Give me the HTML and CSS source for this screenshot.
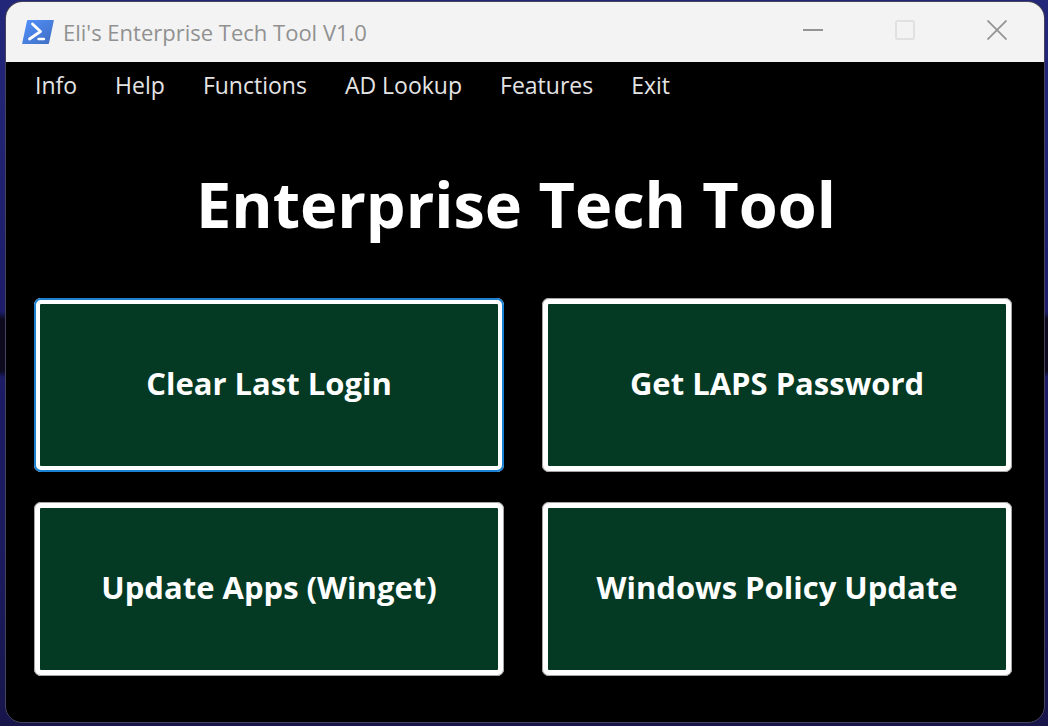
FILE: index.html
```html
<!DOCTYPE html>
<html lang="en">
<head>
<meta charset="utf-8">
<title>Eli's Enterprise Tech Tool V1.0</title>
<link rel="stylesheet" href="styles.css">
</head>
<body>
<div class="window">
  <header class="titlebar">
    <svg class="app-icon" viewBox="0 0 32 24" aria-hidden="true">
      <defs>
        <linearGradient id="ps" x1="0" y1="0" x2="1" y2="1">
          <stop offset="0" stop-color="#5391fe"/>
          <stop offset="1" stop-color="#3e6dbf"/>
        </linearGradient>
      </defs>
      <path d="M6 0H31.200Q32 0 31.800 .8L27 23.200Q26.800 24 26 24H.8Q0 24 .2 23.200L5 .8Q5.200 0 6 0Z" fill="url(#ps)"/>
      <path d="M10.500 4L18.500 11.500L7.500 19" fill="none" stroke="#fff" stroke-width="2.800" stroke-linecap="round" stroke-linejoin="round"/>
      <path d="M16.500 19H22" stroke="#fff" stroke-width="2.400" stroke-linecap="round"/>
    </svg>
    <span class="title">Eli's Enterprise Tech Tool V1.0</span>
    <div class="controls">
      <button class="control" type="button" aria-label="Minimize"><svg viewBox="0 0 20 20"><path d="M0 10H20" stroke="#939594" stroke-width="2"/></svg></button>
      <button class="control" type="button" aria-label="Maximize" disabled><svg viewBox="0 0 20 20"><rect x="1" y="1" width="18" height="18" rx="1.500" fill="none" stroke="#e1e1e1" stroke-width="2"/></svg></button>
      <button class="control" type="button" aria-label="Close"><svg viewBox="0 0 20 20"><path d="M.5 .5L19.500 19.500M19.500 .5L.5 19.500" stroke="#939594" stroke-width="1.800"/></svg></button>
    </div>
  </header>
  <nav class="menu">
    <button class="menu-item" type="button">Info</button>
    <button class="menu-item" type="button">Help</button>
    <button class="menu-item" type="button">Functions</button>
    <button class="menu-item" type="button">AD Lookup</button>
    <button class="menu-item" type="button">Features</button>
    <button class="menu-item" type="button">Exit</button>
  </nav>
  <main class="content">
    <h1 class="heading">Enterprise Tech Tool</h1>
    <div class="actions">
      <button class="action action-default" type="button">Clear Last Login</button>
      <button class="action" type="button">Get LAPS Password</button>
      <button class="action" type="button">Update Apps (Winget)</button>
      <button class="action" type="button">Windows Policy Update</button>
    </div>
  </main>
</div>
</body>
</html>
```
FILE: styles.css
```css
* {
  box-sizing: border-box;
}

body {
  margin: 0;
  min-height: 100vh;
  display: flex;
  padding: 1px 3px 3px 5px;
  font-family: "Open Sans", "Noto Sans", sans-serif;
  background: linear-gradient(#23277a 0, #1c1c68 43%, #0c0a1c 44%, #0c0a1c 51%, #1b1b66 52%, #1a1a5c 80%, #17154a 100%);
}

button {
  margin: 0;
  font: inherit;
}

.window {
  flex: 1;
  display: flex;
  flex-direction: column;
  border: 1px solid #45445c;
  border-radius: 17px;
  overflow: hidden;
  background: #000;
}

.titlebar {
  display: flex;
  align-items: center;
  height: 60px;
  padding-left: 16px;
  background: #f3f3f3;
}

.app-icon {
  width: 32px;
  height: 24px;
}

.title {
  margin-left: 9px;
  font-size: 22px;
  color: #919191;
}

.controls {
  display: flex;
  align-self: stretch;
  margin-left: auto;
  padding-right: 1px;
}

.control {
  display: flex;
  align-items: center;
  justify-content: center;
  width: 92px;
  padding: 0 0 4px;
  border: 0;
  background: none;
}

.control svg {
  width: 20px;
  height: 20px;
}

.menu {
  display: flex;
  gap: 38px;
  padding: 7px 29px;
}

.menu-item {
  padding: 0;
  border: 0;
  background: none;
  font-size: 23px;
  line-height: 32px;
  color: #e4e4e4;
}

.content {
  flex: 1;
  display: flex;
  flex-direction: column;
  padding: 54px 32px 46px 28px;
}

.heading {
  margin: 0 0 52px;
  padding-right: 14px;
  text-align: center;
  font-size: 63px;
  line-height: 84px;
  font-weight: 700;
  color: #fff;
}

.actions {
  flex: 1;
  display: grid;
  grid-template-columns: 1fr 1fr;
  grid-auto-rows: 1fr;
  gap: 30px 38px;
}

.action {
  padding: 0 0 4px;
  border: 6px solid #fff;
  border-radius: 7px;
  outline: 1px solid #a5a2a3;
  outline-offset: -1px;
  background: #043923;
  font-size: 31px;
  font-weight: 700;
  color: #fff;
}

.action-default {
  outline: 2px solid #1a80d2;
  outline-offset: -2px;
}
```
